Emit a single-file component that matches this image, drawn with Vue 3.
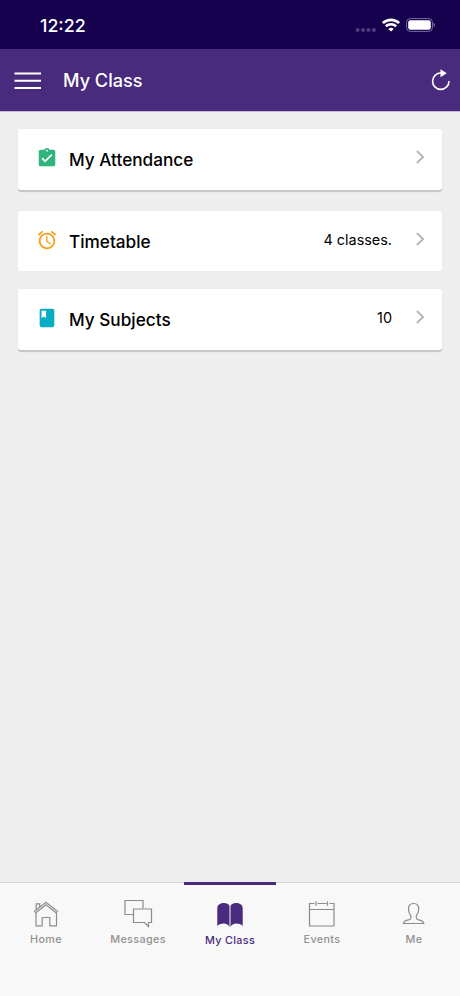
<!--
  App.vue - 我的班级页面
  包含状态栏、标题栏、功能卡片列表和底部导航
-->

<template>
  <div class="page">
    <!-- 系统状态栏 -->
    <div class="status-bar">
      <span class="status-bar__time">12:22</span>
      <div class="status-bar__icons">
        <svg class="signal" width="22" height="6" viewBox="0 0 22 6" fill="#4a3b7c">
          <circle v-for="n in 4" :key="n" :cx="n * 5.4 - 2.8" cy="3" r="2.1" />
        </svg>
        <svg class="wifi" width="18" height="14" viewBox="0 0 18 14" fill="none" stroke="#fff">
          <path d="M.9 5.1C5.5.8 12.5.8 17.1 5.1" stroke-width="2.7" />
          <path d="M3.8 8.3c3-2.7 7.4-2.7 10.4 0" stroke-width="2.5" />
          <path d="M6.3 10.9c1.6-1.4 3.8-1.4 5.4 0L9 13.6z" fill="#fff" stroke="none" />
        </svg>
        <svg class="battery" width="30" height="14" viewBox="0 0 30 14">
          <rect x=".6" y=".6" width="25.8" height="12.8" rx="3.6" fill="none" stroke="#776c9d" stroke-width="1" />
          <rect x="2.2" y="2.2" width="22.6" height="9.6" rx="2.2" fill="#fff" />
          <path d="M27.5 4.8c1.9.6 1.9 3.8 0 4.4z" fill="#776c9d" />
        </svg>
      </div>
    </div>

    <!-- 标题栏 -->
    <header class="header">
      <svg class="header__menu" width="27" height="17" viewBox="0 0 27 17" stroke="#fff" stroke-width="1.9">
        <path d="M.5 1.5h26.5M.5 8.7h26.500M.5 16h26.500" />
      </svg>
      <h1 class="header__title">My Class</h1>
      <svg class="header__refresh" width="20" height="22" viewBox="0 0 20 22">
        <path d="M11.3 4a8.200 8.200 0 1 0 7.700 8" fill="none" stroke="#fff" stroke-width="1.600" />
        <path d="M10.500.2l6.300 4-6.300 4z" fill="#fff" />
      </svg>
    </header>

    <!-- 卡片列表 -->
    <main class="content">
      <div v-for="card in cards" :key="card.name" :class="['card', { 'card--flat': card.flat }]">
        <svg class="card__icon" width="22" height="22" viewBox="0 0 24 24" :fill="card.color">
          <path :d="card.path" />
        </svg>
        <span class="card__title">{{ card.name }}</span>
        <span class="card__value">{{ card.value }}</span>
        <svg class="card__arrow" width="9" height="14" viewBox="0 0 9 14" fill="none" stroke="#b8b8b8" stroke-width="2">
          <path d="M.9 1l6.200 6-6.200 6" />
        </svg>
      </div>
    </main>

    <!-- 底部导航 -->
    <nav class="tabs">
      <div v-for="tab in tabs" :key="tab.name" :class="['tab', { 'tab--active': tab.name === current }]">
        <svg class="tab__icon" width="30" height="30" viewBox="0 0 30 30">
          <path v-for="(d, i) in tab.paths" :key="i" :d="d" />
        </svg>
        <span class="tab__label">{{ tab.name }}</span>
      </div>
    </nav>
  </div>
</template>

<script setup>
import { ref } from 'vue'

// 当前选中的标签
const current = ref('My Class')

// 卡片数据
const cards = [
  {
    name: 'My Attendance',
    value: '',
    color: '#2fb57c',
    path: 'M19 3h-4.18C14.4 1.84 13.3 1 12 1s-2.4.84-2.82 2H5c-1.1 0-2 .9-2 2v14c0 1.1.9 2 2 2h14c1.1 0 2-.9 2-2V5c0-1.1-.9-2-2-2zm-7 0c.55 0 1 .45 1 1s-.45 1-1 1-1-.45-1-1 .45-1 1-1zm-2 14l-4-4 1.41-1.41L10 14.17l6.59-6.59L18 9l-8 8z'
  },
  {
    name: 'Timetable',
    value: '4 classes.',
    color: '#f9a01b',
    flat: true,
    path: 'M22 5.72l-4.6-3.86-1.29 1.53 4.6 3.86L22 5.72zM7.88 3.39L6.6 1.86 2 5.71l1.29 1.53 4.59-3.85zM12.5 8H11v6l4.75 2.85.75-1.23-4-2.37V8zM12 4c-4.97 0-9 4.03-9 9s4.02 9 9 9c4.97 0 9-4.03 9-9s-4.03-9-9-9zm0 16c-3.87 0-7-3.13-7-7s3.13-7 7-7 7 3.13 7 7-3.13 7-7 7z'
  },
  {
    name: 'My Subjects',
    value: '10',
    color: '#09adc3',
    path: 'M18 2H6c-1.1 0-2 .9-2 2v16c0 1.1.9 2 2 2h12c1.1 0 2-.9 2-2V4c0-1.1-.9-2-2-2zM6 4h5v8l-2.5-1.5L6 12V4z'
  }
]

// 底部标签数据
const tabs = [
  {
    name: 'Home',
    paths: [
      'M3 12.8L15 3.2l12 9.6M5.2 11V4.8h3.5v3.3M5 13.8v13h6.2V18.5h7.6v8.3h6.7v-13',
      'M4.3 14.2L15 5.8l10.7 8.4'
    ]
  },
  {
    name: 'Messages',
    paths: [
      'M10 15.5H2v-14h18v8',
      'M10.5 10h18v13.5h-3v4l-4-4h-11z'
    ]
  },
  {
    name: 'My Class',
    paths: [
      'M14.5 7v21c-1.5-4-8-4.8-12.2-1V9c0-6 10.7-6.7 12.2-2z',
      'M15.5 7v21c1.5-4 8-4.8 12.2-1V9c0-6-10.7-6.7-12.2-2z'
    ]
  },
  {
    name: 'Events',
    paths: [
      'M7.5 4.5h-5V27H27V4.5h-4.5M10.500 4.5h9M2.500 10.500H27M9 2.300v4.500M20.500 2.300v4.500'
    ]
  },
  {
    name: 'Me',
    paths: [
      'M14.600 4.500c-3.800 0-5.300 2.500-5.100 6 .1 2.800.9 4.400 2.300 6 .8 3.200-.5 4-3.500 4.700-2.500.6-3.600 1.400-3.900 3.300h20.400c-.3-1.900-1.400-2.700-3.900-3.300-3-.7-4.300-1.500-3.500-4.700 1.400-1.600 2.200-3.200 2.300-6 .2-3.500-1.300-6-5.100-6z'
    ]
  }
]
</script>

<style>
body {
  margin: 0;
}
</style>

<style scoped>
/* 页面整体 */
.page {
  display: flex;
  flex-direction: column;
  height: 996px;
  background: #eee;
  font-family: Inter, "Liberation Sans", sans-serif;
}

/* 状态栏 */
.status-bar {
  display: flex;
  justify-content: space-between;
  height: 49px;
  padding: 0 24px 0 40px;
  box-sizing: border-box;
  background: #15014d;
  color: #fff;
}

.status-bar__time {
  padding-top: 15px;
  font-size: 17.8px;
  font-weight: 500;
  line-height: 22px;
}

.status-bar__icons {
  display: flex;
  align-items: flex-start;
  padding-top: 18px;
}

.signal {
  margin: 9px 5px 0 0;
}

.wifi {
  margin-right: 6px;
}

/* 标题栏 */
.header {
  display: flex;
  align-items: center;
  height: 62px;
  padding: 0 10px 0 14px;
  box-sizing: border-box;
  background: #482b7c;
  box-shadow: 0 1px 0 #c5b8d8;
  color: #fff;
}

.header__title {
  flex: 1;
  margin: 0 0 0 22px;
  font-size: 18.1px;
  font-weight: 500;
  line-height: 24px;
}

/* 内容区 */
.content {
  flex: 1;
  padding: 18px;
}

/* 卡片 */
.card {
  display: flex;
  align-items: center;
  height: 61px;
  margin-bottom: 21px;
  padding: 0 17px 0 18px;
  box-sizing: border-box;
  border-radius: 3px;
  background: #fff;
  box-shadow: 0 2px 1px #c4c4c4;
  color: #000;
}

/* 无阴影卡片 */
.card--flat {
  height: 60px;
  margin-bottom: 18px;
  box-shadow: none;
}

.card__icon {
  margin: 0 11px 3px 0;
}

.card__title {
  flex: 1;
  font-size: 17.2px;
  font-weight: 500;
}

.card__value {
  margin: 0 24px 4px 0;
  font-size: 14.4px;
}

.card__arrow {
  margin-bottom: 5px;
}

/* 底部导航 */
.tabs {
  display: flex;
  height: 114px;
  box-sizing: border-box;
  border-top: 1px solid #d8d8d8;
  background: #f8f8f8;
}

.tab {
  display: flex;
  flex: 1;
  flex-direction: column;
  align-items: center;
  padding-top: 16px;
  color: #929292;
}

.tab__icon {
  fill: none;
  stroke: #8c8c8c;
  stroke-width: 1.2;
}

.tab__label {
  margin-top: 4px;
  font-size: 10.8px;
  font-weight: 500;
  line-height: 14px;
  letter-spacing: 0.35px;
}

/* 选中标签 */
.tab--active {
  margin-top: -1px;
  padding-top: 14px;
  border-top: 3px solid #482b7c;
  color: #482b7c;
}

.tab--active .tab__icon {
  fill: #482b7c;
  stroke: none;
}

.tab--active .tab__label {
  margin-top: 5px;
}
</style>
